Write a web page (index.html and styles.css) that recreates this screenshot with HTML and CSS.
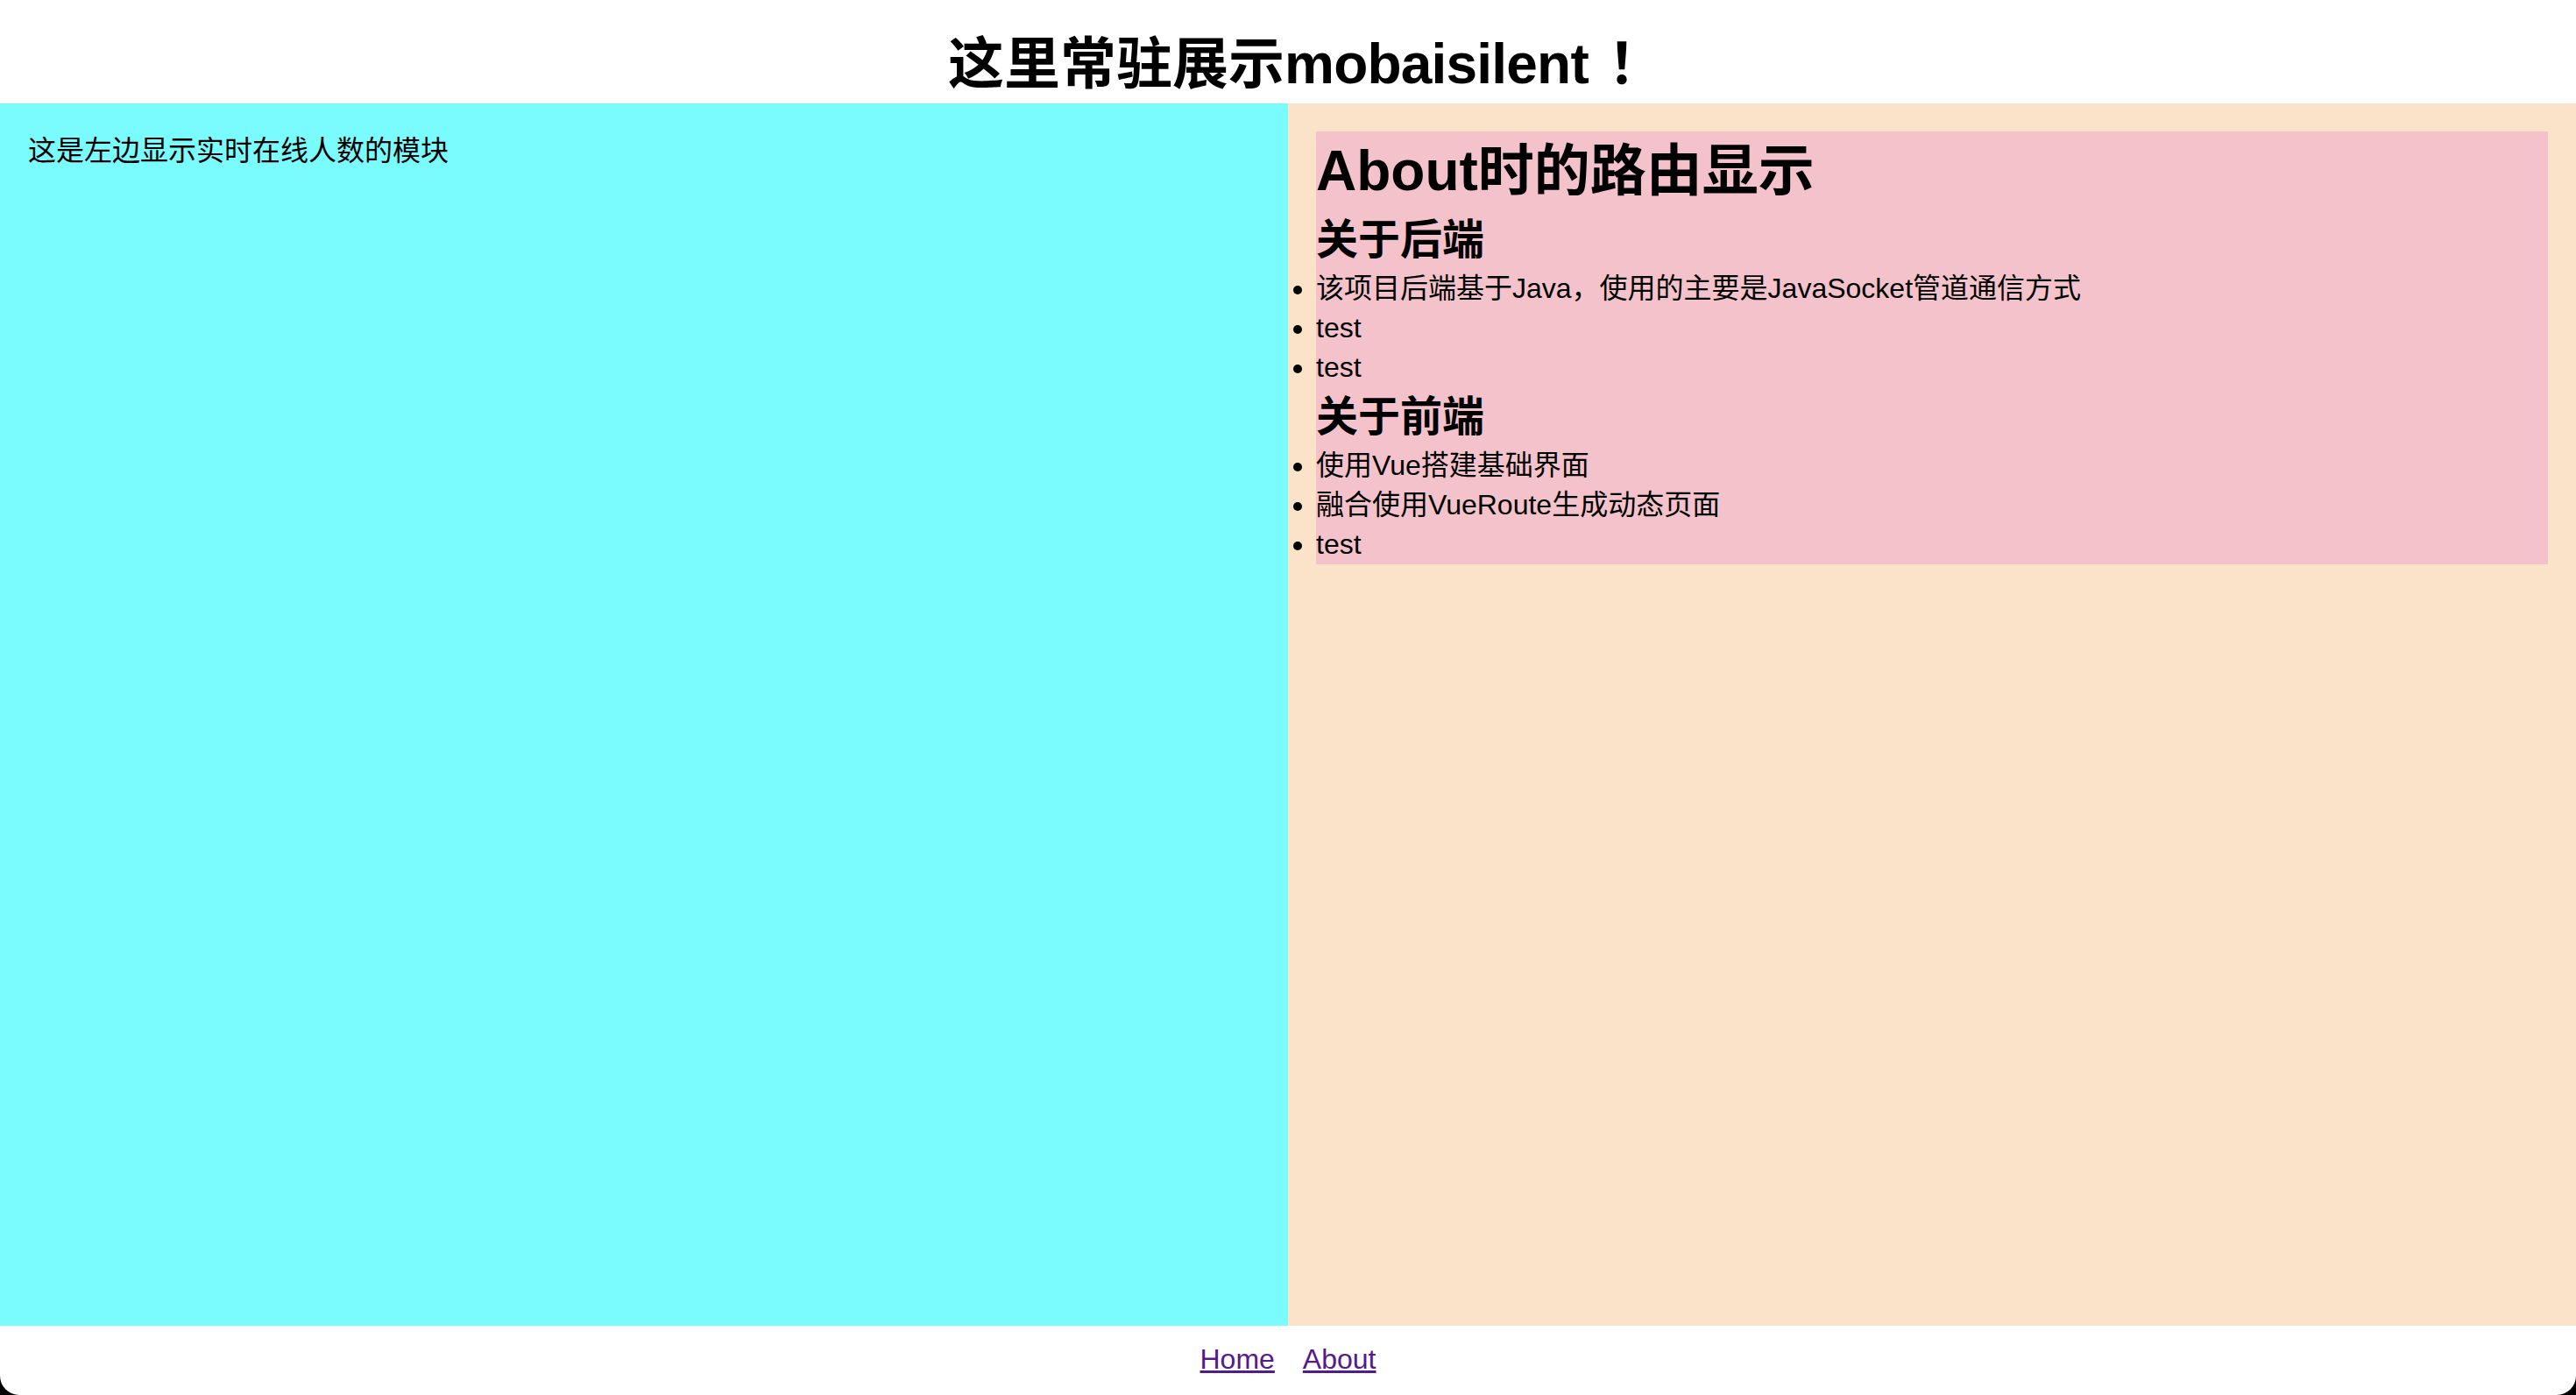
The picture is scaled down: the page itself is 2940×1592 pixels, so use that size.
FILE: index.html
```html
<!DOCTYPE html>
<html lang="zh-CN">
<head>
<meta charset="utf-8">
<title>mobaisilent</title>
<link rel="stylesheet" href="styles.css">
</head>
<body>
<div class="app">
  <header class="top">
    <h1 class="title">这里常驻展示<span class="latin">mobaisilent</span><span class="punct">！</span></h1>
  </header>
  <main class="panes">
    <section class="left">这是左边显示实时在线人数的模块</section>
    <section class="right">
      <div class="about">
        <h1 class="about-title">About时的路由显示</h1>
        <h2 class="sub">关于后端</h2>
        <ul class="list">
          <li>该项目后端基于Java，使用的主要是JavaSocket管道通信方式</li>
          <li>test</li>
          <li>test</li>
        </ul>
        <h2 class="sub">关于前端</h2>
        <ul class="list">
          <li>使用Vue搭建基础界面</li>
          <li>融合使用VueRoute生成动态页面</li>
          <li>test</li>
        </ul>
      </div>
    </section>
  </main>
  <footer class="nav">
    <a class="link" href="#/">Home</a>
    <a class="link" href="#/about">About</a>
  </footer>
</div>
</body>
</html>
```

FILE: styles.css
```css
html {
  background: #000;
  margin: 0;
  padding: 0;
}
body {
  margin: 0;
  padding: 0;
  font-family: "Liberation Sans", "Noto Sans CJK SC", sans-serif;
  color: #000;
}
.app {
  height: 100vh;
  display: flex;
  flex-direction: column;
  background: #fff;
  border-radius: 0 0 22px 22px;
  overflow: hidden;
}
.top {
  height: 118px;
  padding-top: 28px;
  box-sizing: border-box;
  text-align: center;
}
.title {
  margin: 0;
  font-size: 64px;
  line-height: 90px;
  font-weight: bold;
}
.latin {
  letter-spacing: -0.8px;
}
.punct {
  display: inline-block;
  width: 45px;
  padding-left: 22px;
  box-sizing: border-box;
  text-align: left;
  white-space: nowrap;
}
.panes {
  flex: 1;
  display: flex;
  min-height: 0;
}
.left {
  flex: 1;
  background: #7afbfd;
  padding: 32px;
  font-size: 32px;
  line-height: 45px;
}
.right {
  flex: 1;
  background: #fae3c8;
  padding: 32px;
}
.about {
  background: #f4c2cb;
}
.about-title {
  margin: 0;
  font-size: 64px;
  line-height: 90px;
  font-weight: bold;
}
.sub {
  margin: 0;
  font-size: 48px;
  line-height: 67px;
  font-weight: bold;
}
.list {
  margin: 0;
  padding: 0;
  list-style: disc outside;
  font-size: 32px;
  line-height: 45px;
}
.nav {
  height: 79px;
  padding-top: 16px;
  box-sizing: border-box;
  display: flex;
  justify-content: center;
  gap: 32px;
  font-size: 32px;
  line-height: 45px;
}
.link {
  color: #551a8b;
  text-decoration: underline;
}
```
